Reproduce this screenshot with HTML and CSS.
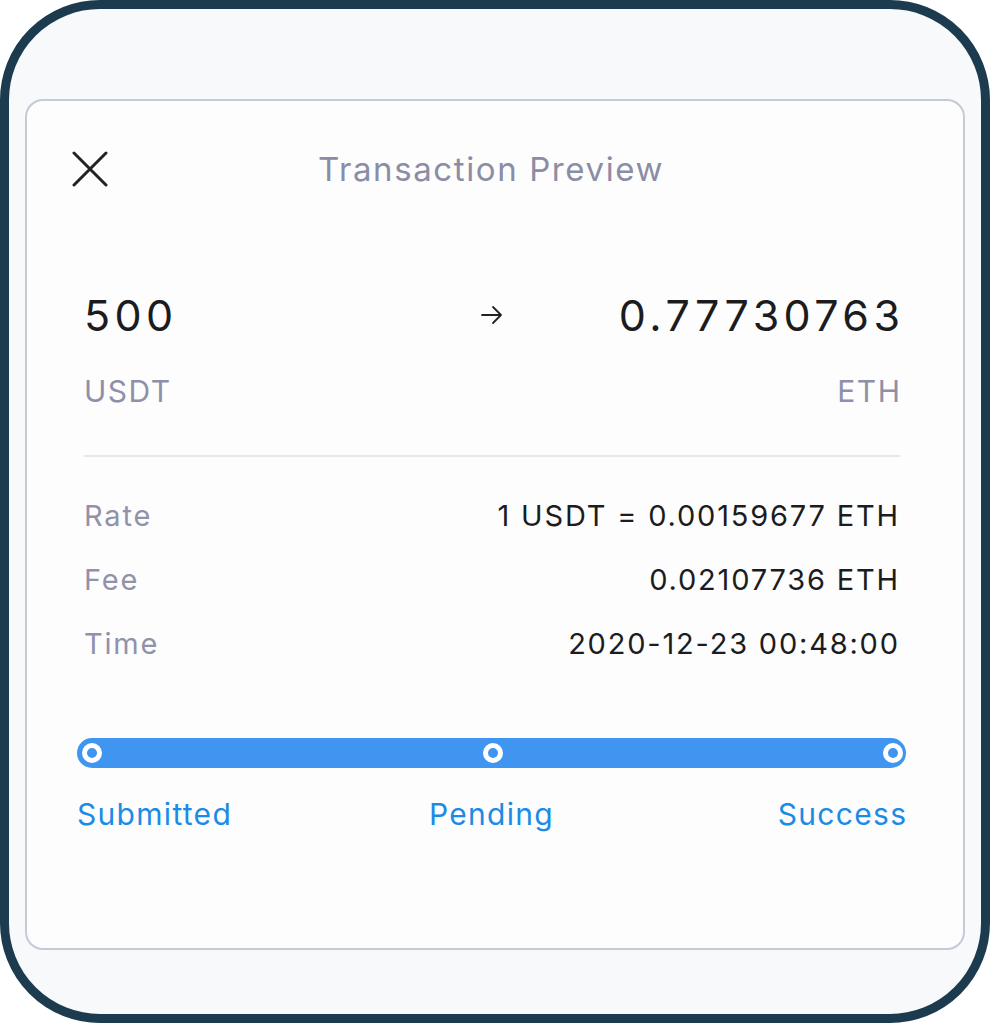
FILE: index.html
```html
<!DOCTYPE html>
<html>
<head>
    <meta charset="utf-8" />
    <title>Transaction Preview</title>
    <link rel="stylesheet" href="styles.css">
</head>
<body>
<div class="frame">
    <div class="card">
        <header class="head">
            <button class="close" aria-label="Close">
                <svg width="36" height="36" viewBox="0 0 36 36"><path d="M2 2L34 34M34 2L2 34" stroke="#222" stroke-width="3" stroke-linecap="round" fill="none"/></svg>
            </button>
            <h1>Transaction Preview</h1>
        </header>

        <div class="amounts">
            <div class="side">
                <div class="value">500</div>
                <div class="unit">USDT</div>
            </div>
            <div class="arrow">
                <svg width="24" height="20" viewBox="0 0 24 20"><path d="M2 10H21M13 2L21 10L13 18" stroke="#222" stroke-width="1.8" stroke-linecap="round" stroke-linejoin="round" fill="none"/></svg>
            </div>
            <div class="side right">
                <div class="value">0.77730763</div>
                <div class="unit">ETH</div>
            </div>
        </div>

        <dl class="details">
            <div class="row"><dt>Rate</dt><dd>1 USDT = 0.00159677 ETH</dd></div>
            <div class="row"><dt>Fee</dt><dd>0.02107736 ETH</dd></div>
            <div class="row"><dt>Time</dt><dd>2020-12-23 00:48:00</dd></div>
        </dl>

        <div class="progress">
            <div class="bar">
                <span class="dot"></span>
                <span class="dot"></span>
                <span class="dot"></span>
            </div>
            <div class="steps">
                <span>Submitted</span>
                <span>Pending</span>
                <span class="last">Success</span>
            </div>
        </div>
    </div>
</div>
</body>
</html>
```

FILE: styles.css
```css
body {
    margin: 0;
    background: #fff;
    font-family: Inter, 'Liberation Sans', sans-serif;
}
.frame {
    box-sizing: border-box;
    width: 990px;
    height: 1023px;
    border: 9px solid #1d3b4f;
    border-radius: 100px;
    background: #f8f9fb;
    padding: 90px 16px 64px 16px;
}
.card {
    box-sizing: border-box;
    height: 100%;
    border: 2px solid #c6c9d8;
    border-radius: 18px;
    background: #fdfdfd;
}

.head {
    position: relative;
    padding-top: 50px;
    height: 36px;
    text-align: center;
}
.head h1 {
    margin: 0 8px 0 0;
    font-size: 33px;
    line-height: 36px;
    font-weight: normal;
    letter-spacing: 1.6px;
    color: #8b8da6;
}
.close {
    position: absolute;
    left: 45px;
    top: 50px;
    padding: 0;
    border: 0;
    background: none;
    width: 36px;
    height: 36px;
}
.close svg {
    display: block;
}

.amounts {
    display: grid;
    grid-template-columns: 1fr auto 1fr;
    align-items: start;
    margin: 103px 63px 0 57px;
    padding-bottom: 46px;
    border-bottom: 2px solid #e6e7eb;
}
.side.right {
    text-align: right;
}
.value {
    font-size: 43px;
    line-height: 50px;
    letter-spacing: 4.4px;
    color: #1c1c1e;
}
.unit {
    margin-top: 33px;
    font-size: 30px;
    line-height: 36px;
    letter-spacing: 1.5px;
    color: #8e90a8;
}
.right .value {
    margin-right: -4.4px;
}
.right .unit {
    margin-right: -1.5px;
}
.arrow {
    padding-top: 15px;
    width: 24px;
}

.details {
    margin: 26px 65px 0 57px;
}
.row {
    display: flex;
    justify-content: space-between;
    align-items: center;
    height: 64px;
    font-size: 29px;
    letter-spacing: 1.8px;
}
.row dt {
    color: #9092aa;
}
.row dd {
    margin: 0 -1.8px 0 0;
    color: #1c1c1e;
}

.progress {
    margin: 63px 57px 0 50px;
}
.bar {
    display: flex;
    justify-content: space-between;
    align-items: center;
    height: 30px;
    border-radius: 15px;
    background: #4095f1;
    padding: 0 3px 0 5px;
}
.dot {
    box-sizing: border-box;
    width: 20px;
    height: 20px;
    border: 5px solid #fff;
    border-radius: 50%;
}
.steps {
    display: grid;
    grid-template-columns: 1fr auto 1fr;
    margin-top: 28px;
    font-size: 30px;
    line-height: 36px;
    letter-spacing: 1.3px;
    color: #1a8be6;
}
.steps .last {
    text-align: right;
    margin-right: -1.3px;
}
```
